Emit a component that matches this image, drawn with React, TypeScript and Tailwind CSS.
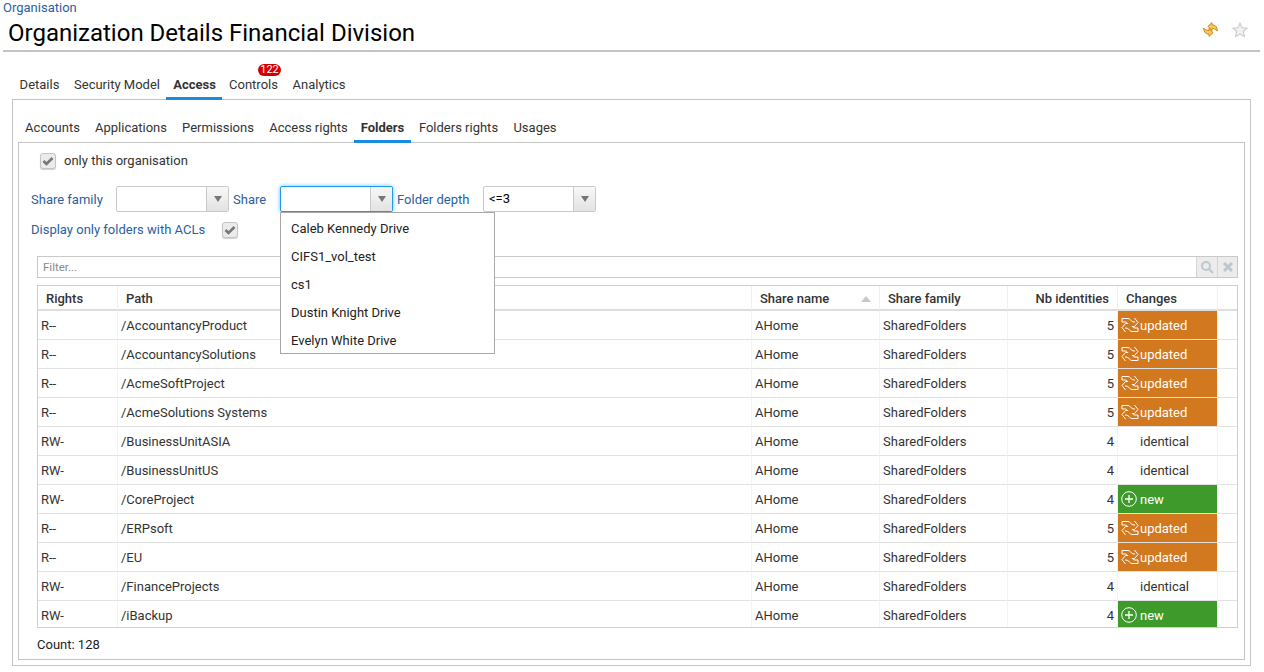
import React from 'react';

type Change = 'updated' | 'identical' | 'new';

interface FolderRow {
  rights: string;
  path: string;
  identities: number;
  change: Change;
}

const rows: FolderRow[] = [
  { rights: 'R--', path: '/AccountancyProduct', identities: 5, change: 'updated' },
  { rights: 'R--', path: '/AccountancySolutions', identities: 5, change: 'updated' },
  { rights: 'R--', path: '/AcmeSoftProject', identities: 5, change: 'updated' },
  { rights: 'R--', path: '/AcmeSolutions Systems', identities: 5, change: 'updated' },
  { rights: 'RW-', path: '/BusinessUnitASIA', identities: 4, change: 'identical' },
  { rights: 'RW-', path: '/BusinessUnitUS', identities: 4, change: 'identical' },
  { rights: 'RW-', path: '/CoreProject', identities: 4, change: 'new' },
  { rights: 'R--', path: '/ERPsoft', identities: 5, change: 'updated' },
  { rights: 'R--', path: '/EU', identities: 5, change: 'updated' },
  { rights: 'RW-', path: '/FinanceProjects', identities: 4, change: 'identical' },
  { rights: 'RW-', path: '/iBackup', identities: 4, change: 'new' },
];

const shares = ['Caleb Kennedy Drive', 'CIFS1_vol_test', 'cs1', 'Dustin Knight Drive', 'Evelyn White Drive'];

const mainTabs = [
  { label: 'Details', width: 'w-[55px]' },
  { label: 'Security Model', width: 'w-[99px] pl-[1px]' },
  { label: 'Access', width: 'w-[56px] pl-[1px]', active: true },
  { label: 'Controls', width: 'w-[63px]', badge: '122' },
  { label: 'Analytics', width: 'w-[68px]' },
];

const subTabs = [
  { label: 'Accounts', width: 'w-[69px]' },
  { label: 'Applications', width: 'w-[88px]' },
  { label: 'Permissions', width: 'w-[86px]' },
  { label: 'Access rights', width: 'w-[93px] pl-[2px]' },
  { label: 'Folders', width: 'w-[57px]', active: true },
  { label: 'Folders rights', width: 'w-[95px]' },
  { label: 'Usages', width: 'w-[58px]' },
];

const UpdatedIcon = () => (
  <svg width="18" height="16" viewBox="0 0 18 16" fill="none" stroke="white" strokeWidth="1" className="shrink-0">
    <path d="M1 1.500h6c2.500 0 3 3.500 6 3.500h1" />
    <path d="M1 1.500v3.500h3c1.500 0 2.200 .8 3 1.800" />
    <path d="M13.500 1l3.500 4.500-3.500 4H11" />
    <path d="M17 14.500h-6c-2.500 0-3-3.500-6-3.500H4" />
    <path d="M17 14.500v-3.500h-3c-1.500 0-2.200-.8-3-1.800" />
    <path d="M4.500 15L1 10.500l3.500-4H7" />
  </svg>
);

const NewIcon = () => (
  <svg width="16" height="16" viewBox="0 0 16 16" fill="none" stroke="white" className="shrink-0">
    <circle cx="8" cy="8" r="7.300" strokeWidth="1" />
    <path d="M8 4v8M4 8h8" strokeWidth="1.300" />
  </svg>
);

const SyncIcon = () => (
  <svg width="15" height="15" viewBox="0 0 15 15" fill="#f8c860" stroke="#c98a14" strokeWidth="1">
    <path d="M5 4.200L9 .6V3h1.500C13 3.500 14.300 6 14.300 9 13 7.300 11.500 6.500 9 6.500v2.200z" />
    <path d="M10 10.800L6 14.400V12H4.500C2 11.500.7 9 .7 6 2 7.700 3.500 8.500 6 8.500V6.300z" />
  </svg>
);

const StarIcon = () => (
  <svg width="16" height="16" viewBox="0 0 16 16" fill="#f1f1f1" stroke="#cfcfcf" strokeWidth="1.200">
    <path d="M8 1l2.100 4.700 5 .5-3.800 3.300 1.100 5L8 11.900l-4.400 2.600 1.100-5L.9 6.200l5-.5z" />
  </svg>
);

const Check = () => (
  <span className="flex h-[16px] w-[16px] items-center justify-center rounded-[3px] border border-[#c5c5c5] bg-[#ebebeb] shadow-[0_1px_1px_#d0d0d0]">
    <svg width="12" height="12" viewBox="0 0 12 12" fill="none" stroke="#777" strokeWidth="2.600">
      <path d="M1.500 6l3 3L10.500 3" />
    </svg>
  </span>
);

const Combo = ({ value, focused, width }: { value?: string; focused?: boolean; width: string }) => (
  <div
    className={`flex h-[26px] ${width} rounded-[2px] border bg-white ${
      focused ? 'border-[#1e9bf0] shadow-[0_0_4px_#6cc0f7]' : 'border-[#c9c9c9]'
    }`}
  >
    <span className="flex-1 pl-[5px] leading-[24px] text-black">{value}</span>
    <span className="flex w-[22px] items-center justify-center border-l border-[#c9c9c9] bg-gradient-to-b from-[#f8f8f8] to-[#e2e2e2]">
      <span className="h-0 w-0 border-x-[4px] border-t-[6px] border-x-transparent border-t-[#777]" />
    </span>
  </div>
);

const ChangeCell = ({ change }: { change: Change }) => {
  if (change === 'updated')
    return (
      <div className="flex h-[28px] items-center gap-[1px] bg-[#d2781e] pl-[3px] text-white">
        <UpdatedIcon />
        <span className="pt-[1px]">updated</span>
      </div>
    );
  if (change === 'new')
    return (
      <div className="flex h-[28px] items-center gap-[3px] bg-[#3f9a2c] pl-[3px] text-white">
        <NewIcon />
        <span className="pt-[1px]">new</span>
      </div>
    );
  return <div className="flex h-[28px] items-center pl-[22px] pt-[1px]">identical</div>;
};

const headCell = 'border-r border-b-2 border-r-[#f0f0f0] border-b-[#dedede] px-[8px] pt-[2px] text-left font-medium text-[#333]';
const bodyCell = 'border-r border-b border-r-[#f3f3f3] border-b-[#e2e2e2] px-[3px] pt-[2px] text-[#333]';

export default function App() {
  return (
    <div className="relative h-[672px] w-[1264px] overflow-hidden bg-white text-[13px] font-['Roboto',sans-serif] text-[#333]">
      <div className="h-[15px] pl-[3px] text-[13px] leading-[15px] text-[#2b5f9e]">Organisation</div>

      <div className="mx-[3px] flex h-[37px] w-[1257px] items-center justify-between border-b-2 border-[#c4c4c4] pl-[5px] pr-[12px]">
        <h1 className="text-[24px] leading-[36px] text-black">Organization Details Financial Division</h1>
        <div className="flex items-center gap-[14px] pb-[6px]">
          <SyncIcon />
          <StarIcon />
        </div>
      </div>

      <div className="relative flex h-[47px] items-end pl-[12px]">
        {mainTabs.map((tab) => (
          <div
            key={tab.label}
            className={`relative flex h-[30px] ${tab.width} items-center justify-center ${
              tab.active ? 'mb-[-1px] border-b-[3px] border-[#1a8ce0] pt-[3px] font-bold' : 'pt-[1px]'
            }`}
          >
            {tab.label}
            {tab.badge && (
              <span className="absolute left-[36px] top-[-5px] h-[12px] w-[23px] rounded-full bg-[#d40000] text-center text-[11px] leading-[12px] text-white">
                {tab.badge}
              </span>
            )}
          </div>
        ))}
      </div>

      <div className="ml-[12px] w-[1239px] border border-[#c4c4c4] px-[5px] pb-[5px]">
        <div className="relative flex h-[42px] items-end">
          {subTabs.map((tab) => (
            <div
              key={tab.label}
              className={`flex h-[30px] ${tab.width} items-center justify-center ${
                tab.active ? 'mb-[-1px] border-b-[3px] border-[#1a8ce0] pt-[3px] font-bold' : 'pt-[1px]'
              }`}
            >
              {tab.label}
            </div>
          ))}
        </div>

        <div className="h-[518px] w-[1227px] border border-[#c4c4c4] pl-[18px] pr-[6px]">
          <div className="flex h-[35px] items-center gap-[8px] pl-[3px]">
            <Check />
            <span className="pt-[1px]">only this organisation</span>
          </div>

          <div className="ml-[-6px] mt-[8px] flex h-[26px] items-center text-[#2b5f9e]">
            <span className="w-[85px] pt-[1px]">Share family</span>
            <Combo width="w-[113px]" />
            <span className="ml-[4px] w-[47px] pt-[1px]">Share</span>
            <Combo width="w-[113px]" focused />
            <span className="ml-[4px] w-[86px] pt-[1px]">Folder depth</span>
            <Combo width="w-[113px]" value="<=3" />
          </div>

          <div className="ml-[-6px] mt-[8px] flex h-[20px] items-center gap-[17px] text-[#2b5f9e]">
            <span>Display only folders with ACLs</span>
            <Check />
          </div>

          <div className="mt-[16px] flex h-[22px] border border-[#c9c9c9]">
            <span className="flex-1 pl-[5px] text-[11.500px] leading-[20px] text-[#8a8a8a]">Filter...</span>
            <span className="flex w-[21px] items-center justify-center border-l border-[#d5d5d5] bg-[#ececec]">
              <svg width="14" height="14" viewBox="0 0 14 14" fill="none" stroke="#bcc8d0" strokeWidth="2">
                <circle cx="6" cy="6" r="4" />
                <path d="M9 9l4 4" />
              </svg>
            </span>
            <span className="flex w-[20px] items-center justify-center border-l border-[#d5d5d5] bg-[#ececec]">
              <svg width="12" height="12" viewBox="0 0 12 12" fill="none" stroke="#bcc8d0" strokeWidth="3">
                <path d="M2 2l8 8M10 2l-8 8" />
              </svg>
            </span>
          </div>

          <div className="mt-[7px] h-[343px] overflow-hidden border border-[#cfcfcf]">
            <table className="w-full table-fixed border-separate border-spacing-0">
              <colgroup>
                <col className="w-[80px]" />
                <col className="w-[634px]" />
                <col className="w-[128px]" />
                <col className="w-[128px]" />
                <col className="w-[110px]" />
                <col className="w-[100px]" />
                <col />
              </colgroup>
              <thead>
                <tr className="h-[25px]">
                  <th className={headCell}>Rights</th>
                  <th className={headCell}>Path</th>
                  <th className={headCell}>
                    <div className="flex items-center justify-between">
                      <span>Share name</span>
                      <span className="h-0 w-0 border-x-[5px] border-b-[6px] border-x-transparent border-b-[#c8c8c8]" />
                    </div>
                  </th>
                  <th className={headCell}>Share family</th>
                  <th className={`${headCell} text-right`}>Nb identities</th>
                  <th className={headCell}>Changes</th>
                  <th className="border-b-2 border-b-[#dedede]" />
                </tr>
              </thead>
              <tbody>
                {rows.map((row) => (
                  <tr key={row.path} className="h-[29px]">
                    <td className={bodyCell}>{row.rights}</td>
                    <td className={bodyCell}>{row.path}</td>
                    <td className={bodyCell}>AHome</td>
                    <td className={bodyCell}>SharedFolders</td>
                    <td className={`${bodyCell} text-right`}>{row.identities}</td>
                    <td className="border-r border-b border-r-[#f3f3f3] border-b-[#e2e2e2] p-0">
                      <ChangeCell change={row.change} />
                    </td>
                    <td className="border-b border-b-[#e2e2e2]" />
                  </tr>
                ))}
              </tbody>
            </table>
          </div>

          <div className="mt-[9px] leading-[16px] text-[#222]">Count: 128</div>
        </div>
      </div>

      <div className="absolute left-[280px] top-[212px] h-[142px] w-[215px] overflow-hidden border border-[#a8a8a8] bg-white pt-[2px]">
        {shares.map((share) => (
          <div key={share} className="h-[28px] pl-[10px] leading-[28px] text-[#222]">
            {share}
          </div>
        ))}
      </div>
    </div>
  );
}
